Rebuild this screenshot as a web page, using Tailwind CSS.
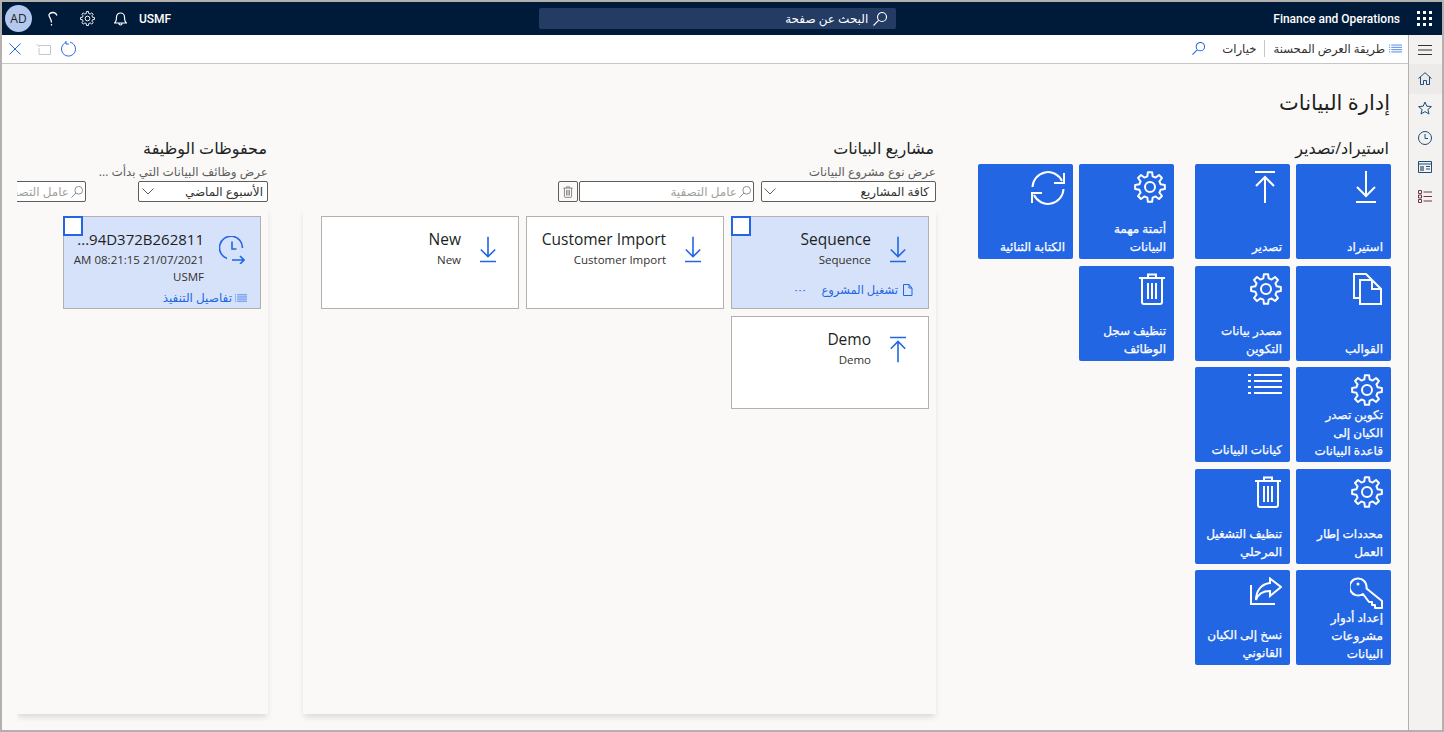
<!DOCTYPE html>
<html lang="ar">
<head>
<meta charset="utf-8">
<script src="https://cdn.jsdelivr.net/npm/@tailwindcss/browser@4"></script>
<title>إدارة البيانات</title>
</head>
<body class="m-0">
<svg class="hidden">
  <symbol id="gear" viewBox="-16 -16 32 32"><polygon fill="none" stroke="currentColor" stroke-width="2" stroke-linejoin="round" points="-2.66,-10.67 -2.09,-14.85 2.09,-14.85 2.66,-10.67 5.66,-9.43 9.02,-11.98 11.98,-9.02 9.43,-5.66 10.67,-2.66 14.85,-2.09 14.85,2.09 10.67,2.66 9.43,5.66 11.98,9.02 9.02,11.98 5.66,9.43 2.66,10.67 2.09,14.85 -2.09,14.85 -2.66,10.67 -5.66,9.43 -9.02,11.98 -11.98,9.02 -9.43,5.66 -10.67,2.66 -14.85,2.09 -14.85,-2.09 -10.67,-2.66 -9.43,-5.66 -11.98,-9.02 -9.02,-11.98 -5.66,-9.43"/><circle r="5" fill="none" stroke="currentColor" stroke-width="2"/></symbol>
  <symbol id="down" viewBox="0 0 20 32"><path fill="none" stroke="currentColor" stroke-width="2" d="M10 0V25M1 16L10 25L19 16M0 31H20"/></symbol>
  <symbol id="up" viewBox="0 0 20 32"><path fill="none" stroke="currentColor" stroke-width="2" d="M0 1H20M10 6V32M1 15L10 6L19 15"/></symbol>
  <symbol id="sync" viewBox="0 0 34 34"><path fill="none" stroke="currentColor" stroke-width="2" d="M1.500 16A15.500 15.500 0 0 1 31 10M33 2V12H23M32.500 18A15.500 15.500 0 0 1 3 24M1 32V22H11"/></symbol>
  <symbol id="docs" viewBox="0 0 30 32"><path fill="none" stroke="currentColor" stroke-width="2" d="M7 25H1V1H13L19 7M7 7H19L28 16V31H7ZM19 7V16H28"/></symbol>
  <symbol id="trash" viewBox="0 0 28 32"><path fill="none" stroke="currentColor" stroke-width="2" d="M1 5H27M10 5V1.500H18V5M4 5V29a2 2 0 0 0 2 2H22a2 2 0 0 0 2-2V5M10 10V26M14 10V26M18 10V26"/></symbol>
  <symbol id="list" viewBox="0 0 34 20"><path fill="none" stroke="currentColor" stroke-width="2" d="M0 1H3M6 1H34M0 7H3M6 7H34M0 13H3M6 13H34M0 19H3M6 19H34"/></symbol>
  <symbol id="key" viewBox="0 0 33 32"><path fill="none" stroke="currentColor" stroke-width="2" stroke-linejoin="round" d="M16.500 11.500L32 24V31H25V28H22V25H19L13 17A8.500 8.500 0 1 1 16.500 11.500Z"/><circle cx="8" cy="7" r="1.500" fill="currentColor"/></symbol>
  <symbol id="share" viewBox="0 0 32 28"><path fill="none" stroke="currentColor" stroke-width="2" d="M20 1.500L31 10L20 19V14C12 14 8 17 6 23C6 14 11 7 20 6ZM1 8V27H25"/></symbol>
  <symbol id="clockrun" viewBox="0 0 26 28"><path fill="none" stroke="currentColor" stroke-width="1.600" d="M13 24H25M21 20L25 24L21 28M23.500 12A11.500 11.500 0 1 0 8 22.500M13 5.500V13H17.500"/></symbol>
  <symbol id="mag" viewBox="0 0 14 14"><path fill="none" stroke="currentColor" stroke-width="1.100" d="M13.500 5A4.500 4.500 0 1 1 4.500 5A4.500 4.500 0 1 1 13.500 5ZM5.800 8.200L0.500 13.500"/></symbol>
</svg>

<div dir="ltr" class="w-[1444px] h-[732px] overflow-hidden border-2 border-[#b3b0ad] bg-[#faf9f8] flex flex-col [font-family:'Open_Sans','DejaVu_Sans',sans-serif] text-[#323130]">

  <header class="h-[33px] shrink-0 bg-[#001a3a] text-white flex items-center relative">
    <div class="flex items-center">
      <div class="w-[27px] h-[27px] ml-[3px] rounded-full bg-[#b4c7ec] text-[#201f1e] text-[12px] flex items-center justify-center">AD</div>
      <svg class="w-[10px] h-[17px] ml-[16px]" viewBox="0 0 10 16"><path fill="none" stroke="currentColor" stroke-width="1.300" d="M9 5A4.500 4.500 0 0 0 1 4C0.500 6.500 3.500 8 3.500 12M3.500 13.500V15"/></svg>
      <svg class="w-[15px] h-[15px] ml-[22px]"><use href="#gear"/></svg>
      <svg class="w-[13px] h-[15px] ml-[19px]" viewBox="0 0 13 15"><path fill="none" stroke="currentColor" stroke-width="1.200" d="M0.500 12C2 11 2.500 9.500 2.500 6A4 4 0 0 1 10.500 6C10.500 9.500 11 11 12.500 12ZM5 12.500A1.500 1.500 0 0 0 8 12.500"/></svg>
      <span class="ml-[12px] text-[12px] [font-family:'Roboto',sans-serif] font-medium">USMF</span>
    </div>
    <div dir="rtl" class="ml-[368px] w-[357px] h-[21px] rounded-[2px] bg-[#243c63] flex items-center pr-[9px] gap-[5px] text-[12px]">
      <svg class="w-[14px] h-[14px]"><use href="#mag"/></svg>
      <span>البحث عن صفحة</span>
    </div>
    <div class="ml-auto flex items-center">
      <span class="text-[12px] [font-family:'Roboto',sans-serif] font-medium">Finance and Operations</span>
      <svg class="w-[15px] h-[15px] ml-[17px] mr-[10px]" viewBox="0 0 15 15" fill="currentColor"><rect width="3" height="3"/><rect x="6" width="3" height="3"/><rect x="12" width="3" height="3"/><rect y="6" width="3" height="3"/><rect x="6" y="6" width="3" height="3"/><rect x="12" y="6" width="3" height="3"/><rect y="12" width="3" height="3"/><rect x="6" y="12" width="3" height="3"/><rect x="12" y="12" width="3" height="3"/></svg>
    </div>
  </header>

  <div class="flex-1 min-h-0 flex">
    <div class="flex-1 min-w-0 flex flex-col">
      <div class="h-[29px] shrink-0 bg-white border-b border-[#c8c6c4] flex items-center justify-between">
        <div class="flex items-center text-[#2266e3]">
          <svg class="w-[12px] h-[12px] ml-[7px]" viewBox="0 0 12 12"><path fill="none" stroke="currentColor" d="M0.500 0.500L11.500 11.500M11.500 0.500L0.500 11.500"/></svg>
          <svg class="w-[15px] h-[12px] ml-[15px] text-[#c8c6c4]" viewBox="0 0 15 12"><path fill="none" stroke="currentColor" d="M3 2.500H14.500V11.500H3V5M0.500 1L3.500 4"/></svg>
          <svg class="w-[16px] h-[16px] ml-[10px]" viewBox="0 0 16 16"><path fill="none" stroke="currentColor" d="M5 1.500A7 7 0 1 0 9 1.200M5 0V3H8"/></svg>
        </div>
        <div dir="rtl" class="flex items-center text-[11.7px]">
          <svg class="w-[13px] h-[11px] mr-[6px] text-[#2266e3]"><use href="#list"/></svg>
          <span class="mr-[4px]">طريقة العرض المحسنة</span>
          <span class="w-px h-[17px] bg-[#c8c6c4] mr-[8px]"></span>
          <span class="mr-[8px]">خيارات</span>
          <svg class="w-[13px] h-[13px] mr-[17px] text-[#2266e3]"><use href="#mag"/></svg>
        </div>
      </div>

      <main dir="rtl" class="flex-1 min-h-0 overflow-hidden pr-[17px] pl-[15px] bg-[#faf9f8]">
        <h1 class="h-[32px] mt-[22px] mr-[1px] text-[21px] leading-[32px] font-normal text-[#201f1e]">إدارة البيانات</h1>
        <div class="flex mt-[19px] items-start">

          <section class="w-[413px] shrink-0">
            <h2 class="h-[22px] mr-[2px] text-[16px] leading-[22px] font-normal text-[#201f1e]">استيراد/تصدير</h2>
            <div class="mt-[5px] flex gap-[21px]">
              <div class="grid grid-cols-[95px_95px] auto-rows-[95px] gap-x-[6px] gap-y-[6.5px] text-white text-[12px] leading-[18px] [-webkit-text-stroke:0.25px_white]">
                <a class="bg-[#2266e3] rounded-[2px] pr-[8px] pl-[3px] pb-[3px] pt-[7px] flex flex-col justify-between"><svg class="w-[20px] h-[32px] mr-[7px] shrink-0"><use href="#down"/></svg><span>استيراد</span></a>
                <a class="bg-[#2266e3] rounded-[2px] pr-[8px] pl-[3px] pb-[3px] pt-[7px] flex flex-col justify-between"><svg class="w-[20px] h-[32px] mr-[7px] shrink-0"><use href="#up"/></svg><span>تصدير</span></a>
                <a class="bg-[#2266e3] rounded-[2px] pr-[8px] pl-[3px] pb-[3px] pt-[7px] flex flex-col justify-between"><svg class="w-[30px] h-[32px] shrink-0"><use href="#docs"/></svg><span>القوالب</span></a>
                <a class="bg-[#2266e3] rounded-[2px] pr-[8px] pl-[3px] pb-[3px] pt-[7px] flex flex-col justify-between"><svg class="w-[32px] h-[32px] shrink-0"><use href="#gear"/></svg><span>مصدر بيانات<br>التكوين</span></a>
                <a class="bg-[#2266e3] rounded-[2px] pr-[8px] pl-[3px] pb-[3px] pt-[7px] flex flex-col justify-between"><svg class="w-[32px] h-[32px] shrink-0"><use href="#gear"/></svg><span>تكوين تصدر<br>الكيان إلى<br>قاعدة البيانات</span></a>
                <a class="bg-[#2266e3] rounded-[2px] pr-[8px] pl-[3px] pb-[3px] pt-[7px] flex flex-col justify-between"><svg class="w-[34px] h-[20px] shrink-0"><use href="#list"/></svg><span>كيانات البيانات</span></a>
                <a class="bg-[#2266e3] rounded-[2px] pr-[8px] pl-[3px] pb-[3px] pt-[7px] flex flex-col justify-between"><svg class="w-[32px] h-[32px] shrink-0"><use href="#gear"/></svg><span>محددات إطار<br>العمل</span></a>
                <a class="bg-[#2266e3] rounded-[2px] pr-[8px] pl-[3px] pb-[3px] pt-[7px] flex flex-col justify-between"><svg class="w-[28px] h-[32px] shrink-0"><use href="#trash"/></svg><span>تنظيف التشغيل<br>المرحلي</span></a>
                <a class="bg-[#2266e3] rounded-[2px] pr-[8px] pl-[3px] pb-[3px] pt-[7px] flex flex-col justify-between"><svg class="w-[33px] h-[32px] shrink-0"><use href="#key"/></svg><span>إعداد أدوار<br>مشروعات<br>البيانات</span></a>
                <a class="bg-[#2266e3] rounded-[2px] pr-[8px] pl-[3px] pb-[3px] pt-[7px] flex flex-col justify-between"><svg class="w-[32px] h-[28px] shrink-0"><use href="#share"/></svg><span>نسخ إلى الكيان<br>القانوني</span></a>
              </div>
              <div class="grid grid-cols-[95px_95px] auto-rows-[95px] gap-x-[6px] gap-y-[6.5px] text-white text-[12px] leading-[18px] [-webkit-text-stroke:0.25px_white]">
                <a class="bg-[#2266e3] rounded-[2px] pr-[8px] pl-[3px] pb-[3px] pt-[7px] flex flex-col justify-between"><svg class="w-[32px] h-[32px] shrink-0"><use href="#gear"/></svg><span>أتمتة مهمة<br>البيانات</span></a>
                <a class="bg-[#2266e3] rounded-[2px] pr-[8px] pl-[3px] pb-[3px] pt-[7px] flex flex-col justify-between"><svg class="w-[34px] h-[34px] shrink-0"><use href="#sync"/></svg><span>الكتابة الثنائية</span></a>
                <a class="bg-[#2266e3] rounded-[2px] pr-[8px] pl-[3px] pb-[3px] pt-[7px] flex flex-col justify-between"><svg class="w-[28px] h-[32px] shrink-0"><use href="#trash"/></svg><span>تنظيف سجل<br>الوظائف</span></a>
              </div>
            </div>
          </section>

          <section class="w-[633px] shrink-0 mr-[42px]">
            <h2 class="h-[22px] mr-[2px] text-[16px] leading-[22px] font-normal text-[#201f1e]">مشاريع البيانات</h2>
            <p class="h-[16px] mt-[5px] text-[12px] leading-[16px] text-[#605e5c]">عرض نوع مشروع البيانات</p>
            <div class="mt-[1px] flex gap-[7px] text-[12px]">
              <div class="w-[175px] h-[21px] border border-[#605e5c] rounded-[2px] bg-white flex items-center justify-between pr-[6px] pl-[2px]"><span>كافة المشاريع</span><svg class="w-[12px] h-[7px] text-[#605e5c]" viewBox="0 0 12 7"><path fill="none" stroke="currentColor" d="M0.500 0.500L6 6L11.500 0.500"/></svg></div>
              <div class="flex gap-[1px]">
                <div class="w-[175px] h-[21px] border border-[#605e5c] rounded-[2px] bg-white flex items-center px-[2px] gap-[2px] text-[#a19f9d]"><svg class="w-[12px] h-[12px] text-[#8a8886]"><use href="#mag"/></svg><span>عامل التصفية</span></div>
                <div class="w-[20px] h-[21px] border border-[#605e5c] rounded-[2px] flex items-center justify-center text-[#605e5c]"><svg class="w-[10px] h-[12px]"><use href="#trash"/></svg></div>
              </div>
            </div>
            <div class="mt-[7px] h-[505px] p-[7px] bg-[#faf9f8] shadow-[0_4px_6px_-1px_rgba(0,0,0,0.13)]">
              <div class="grid grid-cols-[198px_198px_198px] auto-rows-[93px] gap-x-[7px] gap-y-[7px]">
                <article class="relative bg-[#d6e2f9] border border-[#b3b0ad] flex flex-col">
                  <span class="absolute -top-px -left-px w-[20px] h-[20px] bg-white border-2 border-[#2266e3]"></span>
                  <div class="flex pt-[11px] pr-[22px] gap-[19px]">
                    <svg class="w-[16px] h-[27px] mt-[8px] shrink-0 text-[#2266e3]"><use href="#down"/></svg>
                    <div><div class="text-[15.5px] leading-[22px] font-medium text-[#201f1e]">Sequence</div><div class="text-[11.5px] leading-[16px] mt-[2px]">Sequence</div></div>
                  </div>
                  <div class="mt-auto mb-[10px] mr-[14px] flex items-center text-[#2266e3] text-[11.5px] leading-[16px]">
                    <svg class="w-[11px] h-[12px] ml-[5px]" viewBox="0 0 11 12"><path fill="none" stroke="currentColor" d="M0.500 11.500H9V4L6 0.500H0.500ZM6 0.500V4H9"/></svg>
                    <span>تشغيل المشروع</span>
                    <span class="mr-[15px] tracking-[1px]">···</span>
                  </div>
                </article>
                <article class="bg-white border border-[#b3b0ad]">
                  <div class="flex pt-[11px] pr-[22px] gap-[19px]">
                    <svg class="w-[16px] h-[27px] mt-[8px] shrink-0 text-[#2266e3]"><use href="#down"/></svg>
                    <div><div class="text-[15.5px] leading-[22px] font-medium text-[#201f1e]">Customer Import</div><div class="text-[11.5px] leading-[16px] mt-[2px]">Customer Import</div></div>
                  </div>
                </article>
                <article class="bg-white border border-[#b3b0ad]">
                  <div class="flex pt-[11px] pr-[22px] gap-[19px]">
                    <svg class="w-[16px] h-[27px] mt-[8px] shrink-0 text-[#2266e3]"><use href="#down"/></svg>
                    <div><div class="text-[15.5px] leading-[22px] font-medium text-[#201f1e]">New</div><div class="text-[11.5px] leading-[16px] mt-[2px]">New</div></div>
                  </div>
                </article>
                <article class="bg-white border border-[#b3b0ad]">
                  <div class="flex pt-[11px] pr-[22px] gap-[19px]">
                    <svg class="w-[16px] h-[27px] mt-[8px] shrink-0 text-[#2266e3]"><use href="#up"/></svg>
                    <div><div class="text-[15.5px] leading-[22px] font-medium text-[#201f1e]">Demo</div><div class="text-[11.5px] leading-[16px] mt-[2px]">Demo</div></div>
                  </div>
                </article>
              </div>
            </div>
          </section>

          <section class="w-[257px] shrink-0 mr-[29px] pr-[6px] overflow-hidden pb-[8px]">
            <h2 class="h-[22px] mr-[1px] text-[16px] leading-[22px] font-normal text-[#201f1e]">محفوظات الوظيفة</h2>
            <p class="h-[16px] mt-[5px] text-[12px] leading-[16px] text-[#605e5c]">عرض وظائف البيانات التي بدأت ...</p>
            <div class="mt-[1px] flex gap-[52px] text-[12px]">
              <div class="w-[130px] h-[21px] shrink-0 border border-[#605e5c] rounded-[2px] bg-white flex items-center justify-between pr-[4px] pl-[3px]"><span>الأسبوع الماضي</span><svg class="w-[12px] h-[7px] text-[#605e5c]" viewBox="0 0 12 7"><path fill="none" stroke="currentColor" d="M0.500 0.500L6 6L11.500 0.500"/></svg></div>
              <div class="w-[175px] h-[21px] shrink-0 border border-[#605e5c] rounded-[2px] bg-white flex items-center px-[2px] gap-[2px] text-[#a19f9d]"><svg class="w-[12px] h-[12px] text-[#8a8886]"><use href="#mag"/></svg><span>عامل التصفية</span></div>
            </div>
            <div class="mt-[7px] h-[505px] p-[7px] bg-[#faf9f8] shadow-[0_4px_6px_-1px_rgba(0,0,0,0.13)]">
              <article class="relative w-[198px] h-[93px] bg-[#d6e2f9] border border-[#b3b0ad] flex flex-col">
                <span class="absolute -top-px -left-px w-[20px] h-[20px] bg-white border-2 border-[#2266e3]"></span>
                <div class="flex pt-[11px] pr-[15px] gap-[15px]">
                  <svg class="w-[26px] h-[28px] mt-[8px] shrink-0 text-[#2266e3]"><use href="#clockrun"/></svg>
                  <div><div class="text-[15px] leading-[22px] font-medium text-[#201f1e]">94D372B262811...</div><div class="text-[11.5px] leading-[16px] mt-[2px]">21/07/2021 08:21:15 AM</div><div class="text-[11.5px] leading-[16px] mt-[1px]">USMF</div></div>
                </div>
                <div class="mt-auto mb-[2px] mr-[13px] flex items-center text-[#2266e3] text-[12px] leading-[16px]">
                  <svg class="w-[12px] h-[8px] ml-[3px]"><use href="#list"/></svg>
                  <span>تفاصيل التنفيذ</span>
                </div>
              </article>
            </div>
          </section>
        </div>
      </main>
    </div>

    <nav class="w-[34px] shrink-0 bg-[#f3f2f1] border-l border-[#b3b0ad] flex flex-col text-[#323130]">
      <div class="h-[29px] pr-px flex items-center justify-center"><svg class="w-[14px] h-[10px]" viewBox="0 0 14 10"><path fill="none" stroke="currentColor" d="M0 0.500H14M0 5H14M0 9.500H14"/></svg></div>
      <div class="h-[29.500px] pr-px bg-[#edebe9] flex items-center justify-center text-[#1f4e79]"><svg class="w-[14px] h-[13px]" viewBox="0 0 14 13"><path fill="none" stroke="currentColor" d="M0.500 6.500L7 0.700L13.500 6.500M2.500 5V12.500H5.500V8.500H8.500V12.500H11.500V5"/></svg></div>
      <div class="h-[29.500px] pr-px flex items-center justify-center text-[#1f4e79]"><svg class="w-[14px] h-[14px]" viewBox="0 0 14 14"><path fill="none" stroke="currentColor" d="M7 1L8.800 5.200L13.400 5.600L9.900 8.500L11 13L7 10.600L3 13L4.100 8.500L0.600 5.600L5.200 5.200Z"/></svg></div>
      <div class="h-[29.500px] pr-px flex items-center justify-center text-[#1f4e79]"><svg class="w-[14px] h-[14px]" viewBox="0 0 14 14"><path fill="none" stroke="currentColor" d="M13.500 7A6.500 6.500 0 1 1 0.500 7A6.500 6.500 0 1 1 13.500 7ZM7 3V7.500H10"/></svg></div>
      <div class="h-[29.500px] pr-px flex items-center justify-center text-[#1f4e79]"><svg class="w-[14px] h-[12px]" viewBox="0 0 14 12"><path fill="none" stroke="currentColor" d="M0.500 0.500H13.500V11.500H0.500ZM0.500 3H13.500M8 5.500H12M8 8H12"/><rect x="2" y="5" width="4" height="5" fill="#7a8b99"/></svg></div>
      <div class="h-[29.500px] pr-px flex items-center justify-center text-[#6b3a4a]"><svg class="w-[14px] h-[13px]" viewBox="0 0 14 13"><path fill="none" stroke="currentColor" d="M0.500 0.500H3.500V3.500H0.500ZM0.500 5H3.500V8H0.500ZM0.500 9.500H3.500V12.500H0.500ZM5.500 2H14M5.500 6.500H14M5.500 11H14"/></svg></div>
    </nav>
  </div>
</div>
</body>
</html>
